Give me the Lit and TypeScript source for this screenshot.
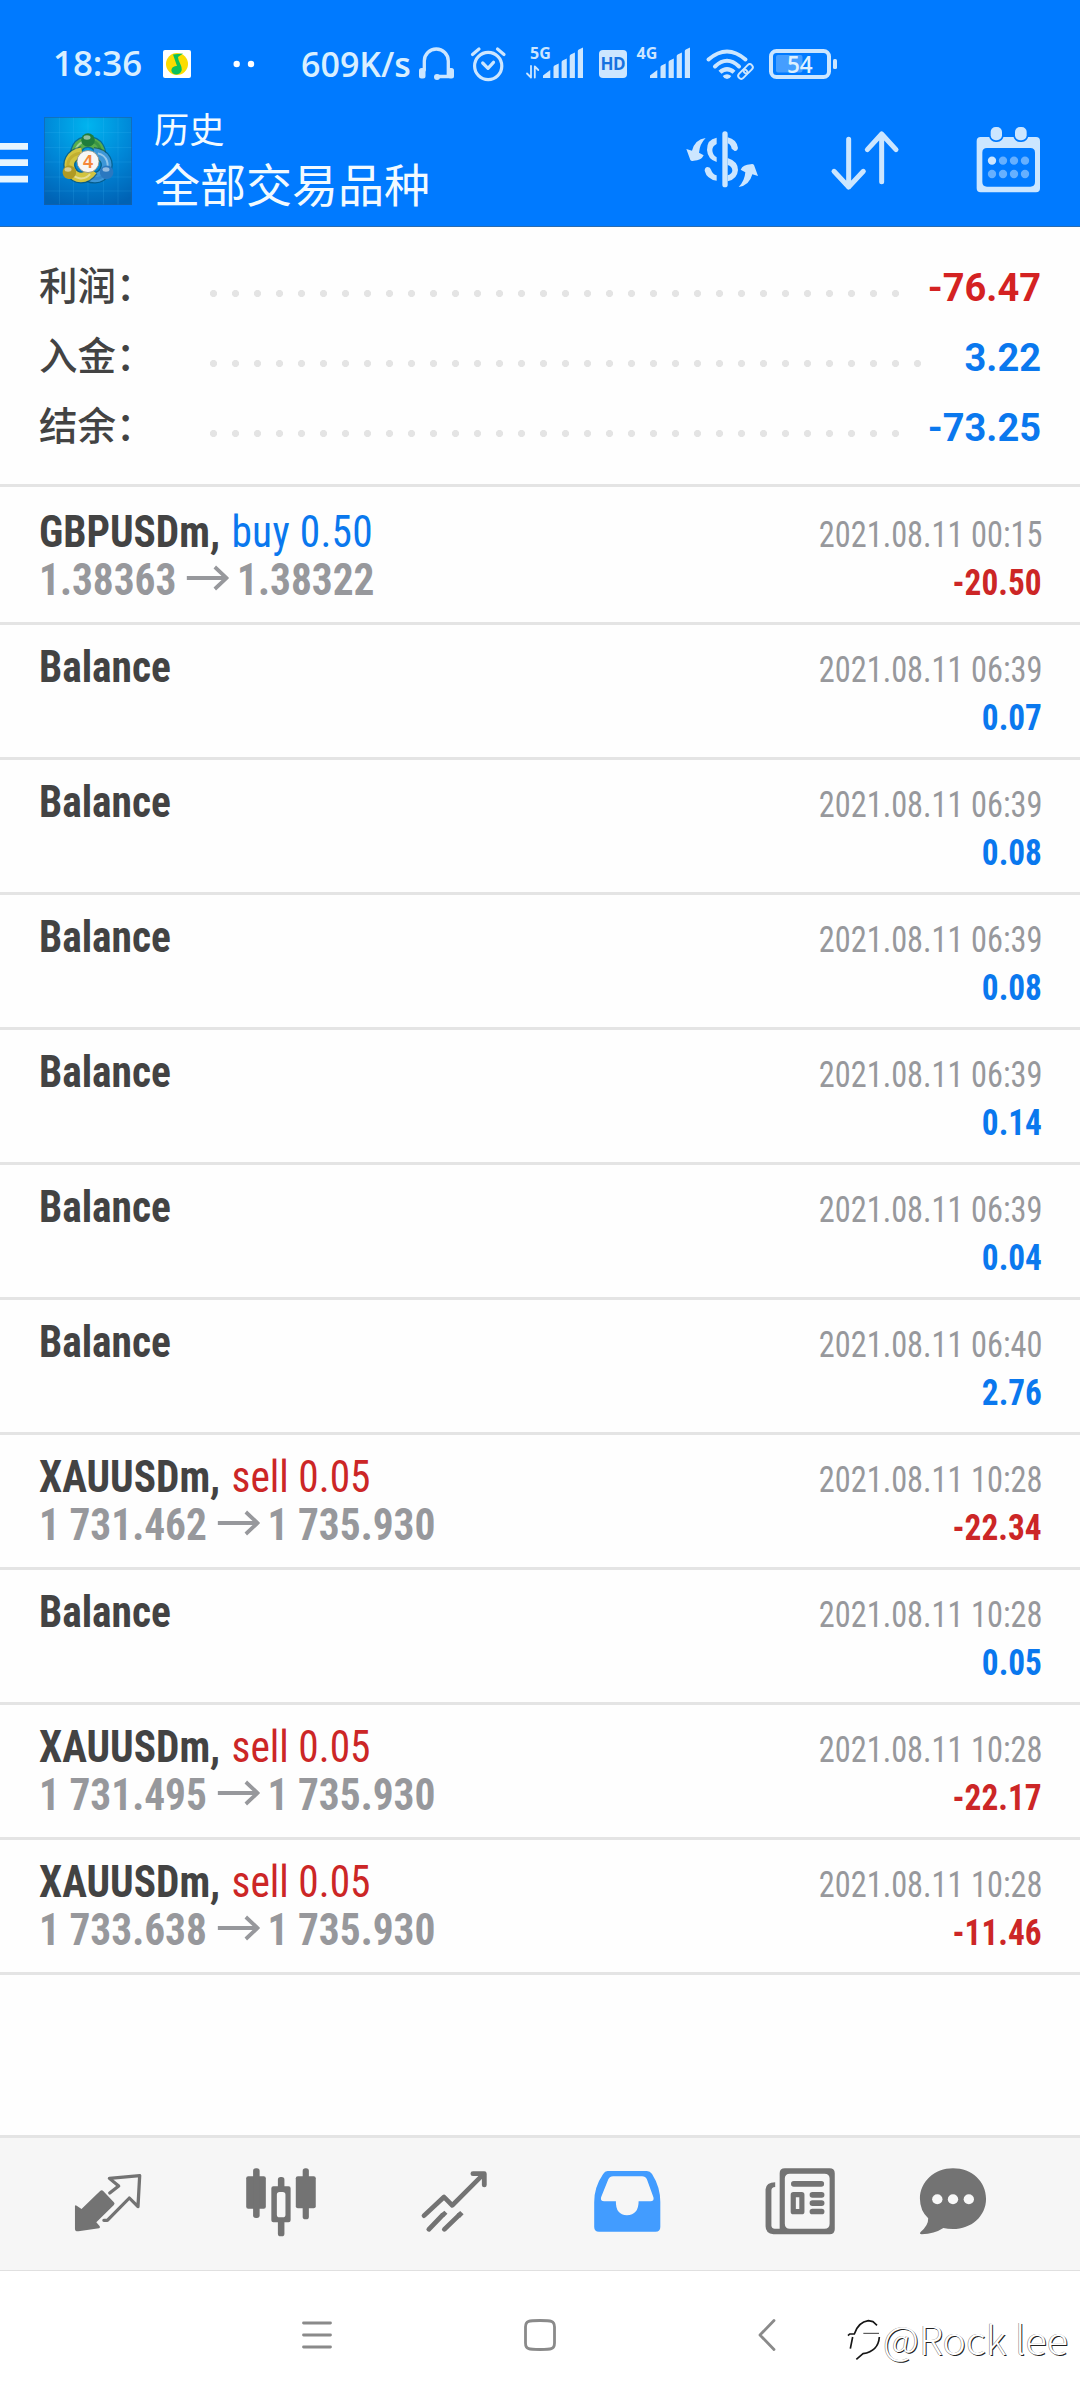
import { LitElement, html, svg, css, nothing } from "lit";
import { customElement, property } from "lit/decorators.js";
import { classMap } from "lit/directives/class-map.js";

interface Deal {
  symbol: string;
  side?: "buy" | "sell";
  volume?: string;
  from?: string;
  to?: string;
  time: string;
  amount: string;
}

const balance = (time: string, amount: string): Deal => ({ symbol: "Balance", time, amount });

const DEALS: Deal[] = [
  { symbol: "GBPUSDm", side: "buy", volume: "0.50", from: "1.38363", to: "1.38322", time: "2021.08.11 00:15", amount: "-20.50" },
  balance("2021.08.11 06:39", "0.07"),
  balance("2021.08.11 06:39", "0.08"),
  balance("2021.08.11 06:39", "0.08"),
  balance("2021.08.11 06:39", "0.14"),
  balance("2021.08.11 06:39", "0.04"),
  balance("2021.08.11 06:40", "2.76"),
  { symbol: "XAUUSDm", side: "sell", volume: "0.05", from: "1 731.462", to: "1 735.930", time: "2021.08.11 10:28", amount: "-22.34" },
  balance("2021.08.11 10:28", "0.05"),
  { symbol: "XAUUSDm", side: "sell", volume: "0.05", from: "1 731.495", to: "1 735.930", time: "2021.08.11 10:28", amount: "-22.17" },
  { symbol: "XAUUSDm", side: "sell", volume: "0.05", from: "1 733.638", to: "1 735.930", time: "2021.08.11 10:28", amount: "-11.46" },
];

const SUMMARY = [
  { label: "利润：", value: "-76.47", loss: true },
  { label: "入金：", value: "3.22", loss: false },
  { label: "结余：", value: "-73.25", loss: false },
];

@customElement("status-bar")
class StatusBar extends LitElement {
  static styles = css`
    :host {
      display: flex;
      align-items: center;
      height: 110px;
      padding: 17px 0 0 53px;
      box-sizing: border-box;
      color: #d9efff;
      font: 600 34px/1 "Open Sans", sans-serif;
    }
    svg { display: block; height: 39px; flex: none; fill: #cce6ff; overflow: visible; }
    .line { fill: none; stroke: #cce6ff; stroke-linecap: round; stroke-linejoin: round; }
    .time { width: 110px; font-size: 34.8px; }
    .player { width: 28px; }
    .dots { width: 22px; margin-left: 42px; }
    .speed { width: 115px; margin-left: 46px; white-space: nowrap; }
    .headset { width: 37px; margin-left: 2px; }
    .alarm { width: 38px; margin-left: 14px; }
    .net { width: 62px; margin-left: 18px; }
    .hd { width: 28px; margin-left: 12px; }
    .net2 { width: 58px; margin-left: 8px; }
    .wifi { width: 50px; margin-left: 12px; }
    .battery { width: 70px; margin-left: 13px; }
    .tiny { font: 700 16px "Open Sans", sans-serif; }
    .hdText { font: 700 17px "Open Sans", sans-serif; fill: #1672e0; }
    .level { font: 600 22.5px "Open Sans", sans-serif; fill: #def1ff; }
  `;

  private bars(x: number) {
    return svg`<path d="M${x} 78 v-2.5 l7.3 -5.5 v8z M${x + 10.5} 78 v-11 q0 -1 1 -1.5 l4.2 -2 v14.5z M${x + 18.6} 78 v-16 q0 -1 1 -1.5 l4.2 -2 v19.5z M${x + 26.7} 78 v-22 q0 -1 1 -1.5 l4.2 -2 v25.5z M${x + 34.8} 78 v-27 q0 -1 1 -1.5 l4.2 -2 v30.5z"/>`;
  }

  render() {
    return html`
      <span class="time">18:36</span>
      <svg class="player" viewBox="163 44 28 39">
        <rect x="163" y="50" width="28" height="28" rx="2" fill="#fff"/>
        <circle cx="177" cy="64" r="11" fill="#fbdc00"/>
        <path d="M173 54.5 l10 -1 -5 3.5 q0 3 2.5 7.500 q3 6 -1 9 q-3.500 2 -6.500 0 q-3 -3 -.5 -6 q2 -2 4.500 -1.500z" fill="#0cc05a"/>
      </svg>
      <svg class="dots" viewBox="233 44 22 39"><circle cx="236.700" cy="64" r="3.200" fill="#fff"/><circle cx="251" cy="64" r="3.200" fill="#fff"/></svg>
      <span class="speed">609K/s</span>
      <svg class="headset" viewBox="418 44 37 39">
        <path class="line" stroke-width="3.300" d="M424.300 70V61a12 12 0 0 1 24 0V76.500H437"/>
        <rect x="419" y="68" width="6.500" height="10.500" rx="2.500"/><rect x="447.500" y="68" width="6.500" height="10.500" rx="2.500"/>
        <circle cx="437" cy="77" r="3"/>
      </svg>
      <svg class="alarm" viewBox="469 44 38 39">
        <g class="line" stroke-width="3.200"><circle cx="488.200" cy="66" r="13.600"/><path d="M482.700 63l5.300 5.300 5.500 -6M472.500 54.500l6.500 -5.500M497.500 49l6.500 5.500"/></g>
      </svg>
      <svg class="net" viewBox="525 44 62 39">
        <text class="tiny" x="530" y="59">5G</text>
        <path class="line" stroke-width="1.800" d="M531 66v11.500l-4 -4M534.800 77.500V66.500l3.500 3.500"/>
        ${this.bars(543)}
      </svg>
      <svg class="hd" viewBox="599 44 28 39">
        <rect x="599" y="50" width="28" height="28" rx="4"/>
        <text class="hdText" x="600.500" y="70.300" textLength="25">HD</text>
      </svg>
      <svg class="net2" viewBox="635 44 58 39"><text class="tiny" x="636.500" y="59">4G</text>${this.bars(650)}</svg>
      <svg class="wifi" viewBox="705 44 50 39">
        <g class="line" stroke-width="4"><path d="M708.500 59.500Q727 43.500 745.500 59.500M715 66.500Q727 55 739 66.500"/></g>
        <path d="M718.500 70.800q8.500 -7.500 17 0l-3 3q-5.500 -4.500 -11 0zM722.700 76q4.300 -3.500 8.600 0q-1.500 3 -4.300 3t-4.300 -3z"/>
        <g class="line" stroke-width="1.900" transform="rotate(-45 745.500 71.500)"><rect x="736.500" y="68.500" width="10.500" height="6" rx="3"/><rect x="744" y="68.500" width="10.500" height="6" rx="3"/></g>
      </svg>
      <svg class="battery" viewBox="768 44 70 39">
        <rect class="line" stroke-width="4" x="771" y="51" width="58" height="26" rx="5.500"/>
        <rect x="833" y="59" width="4" height="10" rx="1.500"/>
        <rect x="776" y="55" width="26.500" height="17.500" rx="2" fill="#fff" fill-opacity=".27"/>
        <text class="level" x="787" y="72.500">54</text>
      </svg>
    `;
  }
}

@customElement("app-header")
class AppHeader extends LitElement {
  static styles = css`
    :host { display: block; height: 227px; box-sizing: border-box; background: #007aff; border-bottom: 1px solid #2a6cb0; }
    .bar { display: flex; align-items: center; height: 102px; }
    svg { display: block; flex: none; }
    .menu { width: 28px; height: 44px; fill: #e6f5ff; }
    .logo { width: 88px; height: 88px; margin-left: 16px; }
    .titles { flex: 1; margin-left: 22px; color: #f2faff; font-family: "Noto Sans CJK SC", sans-serif; }
    .section { font-size: 35.2px; line-height: 43px; }
    .filter { font-size: 46px; line-height: 67px; }
    .tools { display: flex; align-items: center; height: 70px; padding-right: 38px; fill: #cce6ff; }
    .tools svg { height: 70px; }
    .currency { width: 75px; margin-right: 70px; }
    .sort { width: 70px; margin-right: 75px; fill: none; stroke: #cce6ff; stroke-width: 15; stroke-linecap: round; stroke-linejoin: round; }
    .calendar { width: 67px; }
    .four { font: 700 18px "Liberation Sans", sans-serif; fill: #f5883a; }
  `;

  private lobe(angle: number, light: string, dark: string) {
    return svg`<g transform="rotate(${angle} 44 44.5)">
      <path d="M34 44C29 33 35 25 44 25s15 8 11 19" fill="none" stroke="#0a4a60" stroke-opacity=".6" stroke-width="12"/>
      <path d="M34 44C29 33 35 25 44 25s15 8 11 19" fill="none" stroke="${light}" stroke-width="9.500"/>
      <path d="M32 40C29 31 36 24 44 24" fill="none" stroke="#fff" stroke-opacity=".45" stroke-width="2"/>
      <path d="M55 42C59 32 54 25 47 24" fill="none" stroke="${dark}" stroke-opacity=".5" stroke-width="3"/>
      <circle cx="44" cy="23" r="6.800" fill="${dark}"/>
    </g>`;
  }

  render() {
    return html`
      <status-bar></status-bar>
      <div class="bar">
        <svg class="menu" viewBox="0 139 28 44"><path d="M0 143h28v6.700H0zM0 159.300h28v6.700H0zM0 175.700h28v6.700H0z"/></svg>
        <svg class="logo" viewBox="0 0 88 88">
          <defs>
            <radialGradient id="bg" cx=".5" cy=".1" r=".95"><stop offset="0" stop-color="#00b4ef"/><stop offset=".55" stop-color="#0085d6"/><stop offset="1" stop-color="#0062b4"/></radialGradient>
          </defs>
          <rect width="88" height="88" fill="url(#bg)"/>
          <path d="M15.500 0v88M29.500 0v88M44 0v88M59.500 0v88M74 0v88M0 15.500h88M0 30.500h88M0 45h88M0 60h88M0 74h88" stroke="#4cc4ff" stroke-opacity=".14"/>
          <rect x=".5" y=".5" width="87" height="87" fill="none" stroke="#1a5fa8" stroke-opacity=".6"/>
          ${this.lobe(0, "#57ad4b", "#1f7d3c")}
          ${this.lobe(120, "#3d97d8", "#2a78c0")}
          ${this.lobe(240, "#d2c440", "#b09a24")}
          <g fill="#fff" fill-opacity=".5"><ellipse cx="43" cy="20.500" rx="3.500" ry="2.200"/><ellipse cx="24" cy="52.500" rx="3.500" ry="2.200"/><ellipse cx="62" cy="52.500" rx="3.500" ry="2.200"/></g>
          <circle cx="44" cy="44.500" r="11" fill="#f7f7f5" stroke="#8a8a7a" stroke-width=".8"/>
          <text class="four" x="39" y="51">4</text>
        </svg>
        <div class="titles">
          <div class="section">历史</div>
          <div class="filter">全部交易品种</div>
        </div>
        <div class="tools">
          <svg class="currency" viewBox="75 78 225 210">
            <rect x="187" y="94" width="16" height="168" rx="8"/>
            <path d="M203 112Q230 118 234 144Q232 154 224 153L215 146Q213 134 203 130Z"/>
            <path fill-rule="evenodd" d="M203 174Q234 184 234 210Q232 238 203 244ZM203 195V226Q217 222 217 211Q216 199 203 195Z"/>
            <path d="M170 113Q140 118 141 150Q143 178 170 186V172Q157 165 157 150Q157 138 170 132ZM143 201q8 0 10 8q5 14 17 17v16q-30 -5 -36 -30q0 -10 9 -11z"/>
            <path d="M137 114Q105 118 96 152L79 147L91 180Q94 184 101 182Q124 182 131 166L117 158Q119 132 137 114Z"/>
            <path d="M236 261Q268 257 277 223L294 228L282 195Q279 191 272 193Q249 194 242 209L256 217Q254 243 236 261Z"/>
          </svg>
          <svg class="sort" viewBox="510 78 210 210"><path d="M566 118V261M522 214L566 261L610 214M665 245V102M622 149L665 102L708 149"/></svg>
          <svg class="calendar" viewBox="945 78 201 210">
            <path fill-rule="evenodd" d="M962 111H1128Q1140 111 1140 123V265Q1140 277 1128 277H962Q950 277 950 265V123Q950 111 962 111ZM981 144Q967 144 967 158V246Q967 260 981 260H1111Q1125 260 1125 246V158Q1125 144 1111 144Z"/>
            <g stroke="#007aff" stroke-width="10" paint-order="stroke"><rect x="992" y="81" width="34" height="40" rx="15"/><rect x="1065" y="81" width="35" height="40" rx="15"/></g>
            <g fill="#66b0ff"><circle cx="1029" cy="182" r="12.500"/><circle cx="1062" cy="182" r="12.500"/><circle cx="1095" cy="182" r="12.500"/><circle cx="996" cy="222" r="12.500"/><circle cx="1029" cy="222" r="12.500"/><circle cx="1062" cy="222" r="12.500"/><circle cx="1095" cy="222" r="12.500"/></g>
            <circle cx="996" cy="182" r="12.500"/>
          </svg>
        </div>
      </div>
    `;
  }
}

@customElement("account-summary")
class AccountSummary extends LitElement {
  static styles = css`
    :host { display: block; height: 260px; box-sizing: border-box; padding: 23px 39px 0; border-bottom: 3px solid #e4e4e4; }
    .row { display: flex; align-items: center; height: 70px; }
    .label { width: 171px; padding-bottom: 4px; font: 500 38.500px/1 "Noto Sans CJK SC", sans-serif; color: #434343; white-space: nowrap; }
    .leader { flex: 1; height: 7px; margin: 16px 28.500px 0 0; background: radial-gradient(circle at 3.5px 3.5px, #e4e4e4 3.200px, transparent 3.900px) 0 0 / 22px 7px repeat-x; }
    .value { padding-top: 5px; font: 700 38px/1 Roboto, sans-serif; color: #0a78ee; }
    .loss { color: #d42222; }
  `;

  render() {
    return SUMMARY.map(
      (s) => html`<div class="row">
        <span class="label">${s.label}</span><span class="leader"></span>
        <span class=${classMap({ value: true, loss: s.loss })}>${s.value}</span>
      </div>`
    );
  }
}

@customElement("deal-row")
class DealRow extends LitElement {
  @property({ attribute: false }) deal!: Deal;

  static styles = css`
    :host { display: block; height: 135px; box-sizing: border-box; padding: 18px 38px 0 39px; border-bottom: 3px solid #e4e4e4; font-family: "Roboto Condensed", Roboto, sans-serif; }
    .line { display: flex; align-items: baseline; height: 48px; font-size: 44px; line-height: 48px; white-space: pre; }
    .line::before { content: "\\200b"; }
    .left { transform: scaleX(0.94); transform-origin: left; font-weight: 700; color: #434343; }
    .order { font-weight: 400; margin-left: 2px; }
    .order.up { letter-spacing: 0.3px; }
    .prices { color: #97989c; }
    .arrow { width: 45px; height: 26px; margin: 0 8.5px 0 11px; vertical-align: 4px; fill: none; stroke: #97989c; stroke-width: 4; }
    .date { transform: scaleX(0.886); transform-origin: right; font-size: 36.500px; color: #97989c; margin-left: auto; }
    .amount { transform: scaleX(0.912); transform-origin: right; font-size: 36.500px; font-weight: 700; margin-left: auto; }
    .up { color: #0a78ee; }
    .down { color: #cc2626; }
  `;

  render() {
    const d = this.deal;
    return html`
      <div class="line">
        <span class="left">${d.symbol}${d.side
          ? html`, <span class=${classMap({ order: true, up: d.side === "buy", down: d.side === "sell" })}>${d.side} ${d.volume}</span>`
          : nothing}</span>
        <span class="date">${d.time}</span>
      </div>
      <div class="line">
        ${d.from
          ? html`<span class="left prices">${d.from}<svg class="arrow" viewBox="0 0 45 26" preserveAspectRatio="none"><path d="M0 13H42M30 2L42.500 13L30 24"/></svg>${d.to}</span>`
          : nothing}
        <span class=${classMap({ amount: true, up: !d.amount.startsWith("-"), down: d.amount.startsWith("-") })}>${d.amount}</span>
      </div>
    `;
  }
}

@customElement("tab-bar")
class TabBar extends LitElement {
  static styles = css`
    :host { display: flex; align-items: center; gap: 103px; height: 136px; box-sizing: border-box; padding: 0 0 4px 72.500px; background: #f6f6f6; border-top: 3px solid #e4e4e4; border-bottom: 1px solid #e0e0e0; }
    svg { display: block; width: 70px; height: 70px; flex: none; fill: #737373; overflow: visible; }
    .stroke { fill: none; stroke: #737373; stroke-linecap: round; stroke-linejoin: round; }
    .active { fill: #429cff; }
    .chat { margin-left: -20px; }
  `;

  render() {
    return html`
      <svg viewBox="213.300 140 203.300 210" preserveAspectRatio="none">
        <path d="M219 256q2 -3 5 0l14 10l54 -54q5 -4 9 0l31 34q4 4 0 8l-51 52l10 12q2 4 -2 6l-60 9q-10 1 -10 -8z"/>
        <path class="stroke" stroke-width="9.500" stroke-linejoin="miter" stroke-linecap="butt" d="M320 218L346 197L319 174L407 166L402 259L377 233L313 300H303"/>
      </svg>
      <svg viewBox="714.400 140 203.300 210" preserveAspectRatio="none">
        <rect x="715" y="168" width="57" height="97" rx="6"/><rect x="735" y="144" width="19" height="149" rx="8"/>
        <rect x="859" y="168" width="58" height="96" rx="6"/><rect x="879" y="144" width="18" height="153" rx="8"/>
        <rect x="807" y="170" width="19" height="40" rx="8"/><rect x="807" y="295" width="19" height="53" rx="8"/>
        <path fill-rule="evenodd" d="M794 198h44q6 0 6 6v96q0 6 -6 6h-44q-6 0 -6 -6v-96q0 -6 6 -6zM812 215q-8 0 -8 8v60q0 8 8 8h9q8 0 8 -8v-60q0 -8 -8 -8z"/>
      </svg>
      <svg viewBox="1216.400 140 203.300 210" preserveAspectRatio="none">
        <g class="stroke" stroke-width="14"><path d="M1231 286L1289 230L1313 255L1404 161M1373 160H1406V194"/><path d="M1245 327L1284 285M1290 327L1332 285"/></g>
        <path d="M1279 281L1290 271L1299 280L1289 291ZM1326 281L1336 272L1346 282L1336 292Z"/>
      </svg>
      <svg class="active" viewBox="151.600 140 203.300 210" preserveAspectRatio="none">
        <path fill-rule="evenodd" d="M197 152H311Q320 152 326 161Q350 200 350 245V320Q350 334 336 334H172Q158 334 158 320V245Q158 200 184 161Q189 152 197 152ZM213 168Q203 168 199 177L178 231Q175 243 187 243H221Q220 284 253 285Q287 284 287 243H321Q333 243 330 231L311 177Q307 168 297 168Z"/>
      </svg>
      <svg viewBox="655.400 140 203.300 210" preserveAspectRatio="none">
        <path fill-rule="evenodd" d="M713 144H843Q858 144 858 159V327Q858 342 843 342H680Q657 340 657 318V207Q659 186 685 186V200Q674 200 674 211V316Q675 325 684 325H698V159Q698 144 713 144ZM728 160Q713 160 713 174V310Q713 325 728 325H828Q843 325 843 310V174Q843 160 828 160Z"/>
        <rect x="731" y="182" width="96" height="17" rx="8"/><rect x="785" y="215" width="43" height="17" rx="8"/><rect x="785" y="240" width="43" height="17" rx="8"/><rect x="785" y="265" width="43" height="17" rx="8"/>
        <path fill-rule="evenodd" d="M738 215h24q8 0 8 8v51q0 8 -8 8h-24q-8 0 -8 -8v-51q0 -8 8 -8zM745 231v35h10v-35z"/>
      </svg>
      <svg class="chat" viewBox="1097.400 140 203.300 210" preserveAspectRatio="none">
        <path d="M1199 144C1254 144 1295 184 1295 235C1295 288 1252 326 1199 326Q1183 326 1171 323Q1145 341 1108 342Q1100 341 1105 335Q1128 315 1127 294Q1103 270 1103 235C1103 184 1146 144 1199 144Z"/>
        <g fill="#f8f8f8"><circle cx="1153.500" cy="237" r="15"/><circle cx="1199" cy="237" r="15"/><circle cx="1245" cy="237" r="15"/></g>
      </svg>
    `;
  }
}

@customElement("system-nav")
class SystemNav extends LitElement {
  static styles = css`
    :host { display: flex; height: 129px; padding: 0 7px 2px 300px; box-sizing: border-box; align-items: center; background: #fff; }
    svg { display: block; flex: none; fill: none; stroke: #8a8a8a; stroke-width: 2.800; stroke-linecap: round; stroke-linejoin: round; }
    .recent { width: 34px; height: 36px; }
    .home { width: 36px; height: 36px; margin-left: 188px; }
    .back { width: 20px; height: 36px; margin-left: 199px; }
    .mark { display: flex; align-items: center; margin: 10px 0 0 70px; height: 54px; }
    .mark svg { width: 34px; height: 44px; stroke: #161616; stroke-width: 5; stroke-linecap: butt; }
    .user { margin-left: 2px; padding-bottom: 4px; font: 300 39.500px/1 "Noto Sans CJK SC", sans-serif; color: #fff; text-shadow: 1px 1px 0.5px #222, -0.5px 0 0.5px #777; white-space: nowrap; }
  `;

  render() {
    return html`
      <svg class="recent" viewBox="0 0 34 36"><path d="M3.500 6H30.500M3.500 18H30.500M3.500 30H30.500"/></svg>
      <svg class="home" viewBox="0 0 36 36"><path d="M18 3.500C29 3.500 32.500 3.500 32.500 10V26C32.500 32.500 29 32.500 18 32.500S3.500 32.500 3.500 26V10C3.500 3.500 7 3.500 18 3.500Z"/></svg>
      <svg class="back" viewBox="0 0 20 36"><path d="M17 3.500L3 18L17 32.500"/></svg>
      <div class="mark">
        <svg viewBox="82 98 102 132"><path d="M85 151L90 146L104 146Q116 110 146 106L160 109L172 120M99 155L92 190M179 155Q176 198 130 205L110 222"/><path stroke-width="2.500" d="M131 144H178"/></svg>
        <span class="user">@Rock lee</span>
      </div>
    `;
  }
}

@customElement("app-root")
class AppRoot extends LitElement {
  static styles = css`
    :host { display: flex; flex-direction: column; width: 1080px; height: 2400px; background: #fefefe; overflow: hidden; }
    .history { flex: 1; padding-top: 3px; }
  `;

  render() {
    return html`
      <app-header></app-header>
      <account-summary></account-summary>
      <div class="history">${DEALS.map((d) => html`<deal-row .deal=${d}></deal-row>`)}</div>
      <tab-bar></tab-bar>
      <system-nav></system-nav>
    `;
  }
}
